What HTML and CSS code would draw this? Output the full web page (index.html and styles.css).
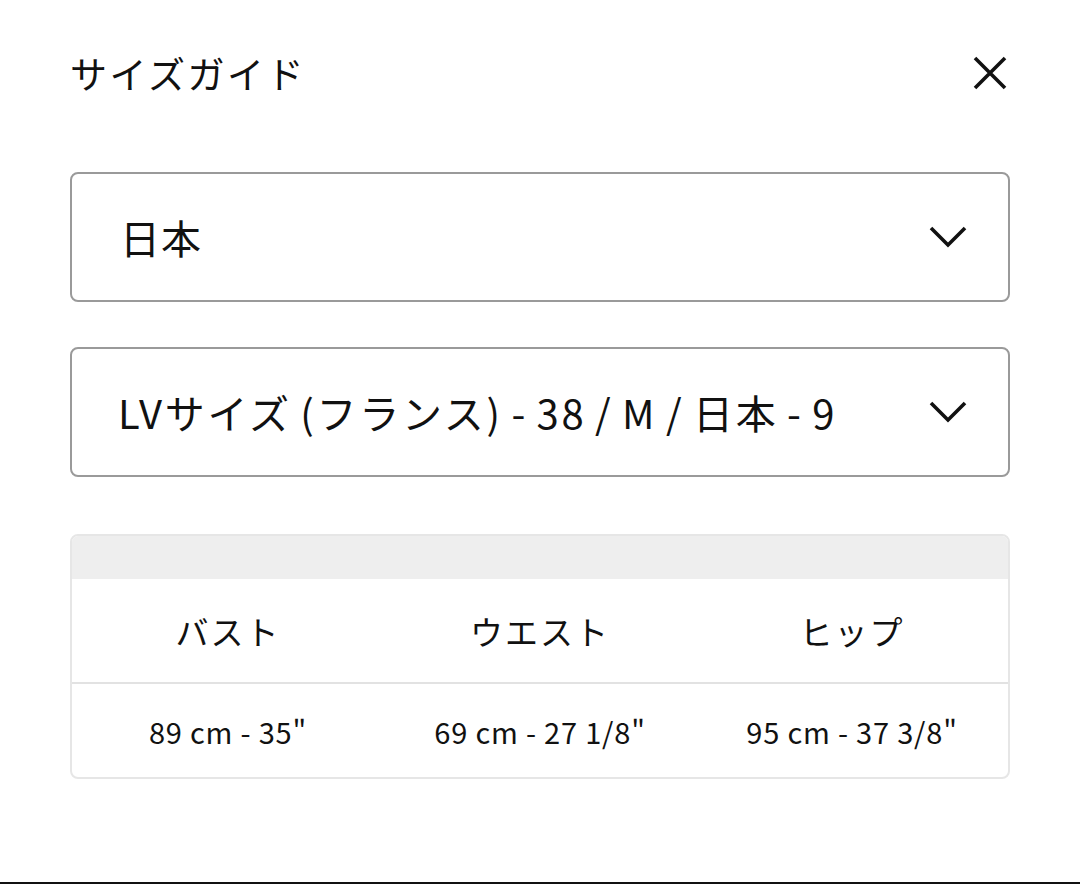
FILE: index.html
```html
<!DOCTYPE html>
<html lang="ja">
<head>
    <meta charset="UTF-8">
    <meta name="viewport" content="width=device-width, initial-scale=1.0">
    <title>サイズガイド</title>
    <link rel="stylesheet" href="styles.css">
</head>
<body>
<div class="sheet">
    <div class="sheet-header">
        <h1 class="sheet-title">サイズガイド</h1>
        <button class="btn-close" aria-label="閉じる">
            <svg width="36" height="36" viewBox="0 0 36 36">
                <path d="M3 3 L33 33 M33 3 L3 33" stroke="#111" stroke-width="3.6" fill="none"/>
            </svg>
        </button>
    </div>

    <!-- Sélecteurs pays / taille -->
    <div class="select-box">
        <span class="select-value">日本</span>
        <svg class="chevron" width="40" height="24" viewBox="0 0 40 24">
            <polyline points="3,3 20,20 37,3" stroke="#111" stroke-width="3.6" fill="none"/>
        </svg>
    </div>
    <div class="select-box select-size">
        <span class="select-value">LVサイズ (フランス) - 38 / M / 日本 - 9</span>
        <svg class="chevron" width="40" height="24" viewBox="0 0 40 24">
            <polyline points="3,3 20,20 37,3" stroke="#111" stroke-width="3.6" fill="none"/>
        </svg>
    </div>

    <!-- Tableau des mesures -->
    <div class="size-table">
        <div class="size-table-band"></div>
        <div class="size-row size-head">
            <div class="size-cell">バスト</div>
            <div class="size-cell">ウエスト</div>
            <div class="size-cell">ヒップ</div>
        </div>
        <div class="size-row size-values">
            <div class="size-cell">89 cm - 35"</div>
            <div class="size-cell">69 cm - 27 1/8"</div>
            <div class="size-cell">95 cm - 37 3/8"</div>
        </div>
    </div>

    <div class="sheet-bottom"></div>
</div>
</body>
</html>
```

FILE: styles.css
```css
* {
    box-sizing: border-box;
}

body {
    margin: 0;
    background-color: #ffffff;
    color: #111111;
    font-family: "Noto Sans CJK JP", "Noto Sans", sans-serif;
}

.sheet {
    height: 884px;
    display: flex;
    flex-direction: column;
    padding: 43px 70px 0;
}

.sheet-header {
    height: 60px;
    display: flex;
    align-items: center;
    justify-content: space-between;
    margin-bottom: 69px;
}

.sheet-title {
    margin: 0;
    font-size: 37px;
    font-weight: 400;
    letter-spacing: 2.5px;
}

.btn-close {
    border: none;
    background: none;
    padding: 0;
    margin-right: 2px;
    display: flex;
    cursor: pointer;
}

.select-box {
    height: 130px;
    border: 2px solid #9a9a9a;
    border-radius: 8px;
    display: flex;
    align-items: center;
    justify-content: space-between;
    padding: 0 40px 0 48px;
    margin-bottom: 45px;
}

.select-value {
    font-size: 40px;
    letter-spacing: 1px;
}

.select-size {
    padding-left: 46px;
    margin-bottom: 57px;
}

.select-size .select-value {
    font-size: 40px;
    letter-spacing: 2.7px;
    word-spacing: -3px;
}

.size-table {
    border: 2px solid #e6e6e6;
    border-radius: 8px;
    overflow: hidden;
}

.size-table-band {
    height: 43px;
    background-color: #eeeeee;
}

.size-row {
    display: grid;
    grid-template-columns: repeat(3, 1fr);
    align-items: center;
}

.size-head {
    height: 105px;
    border-bottom: 2px solid #e2e2e2;
    font-size: 33px;
    letter-spacing: 2px;
}

.size-values {
    height: 93px;
    font-size: 29px;
    letter-spacing: 0.8px;
}

.size-cell {
    text-align: center;
}

.sheet-bottom {
    margin: auto -70px 0;
    height: 2px;
    background-color: #111111;
}
```
